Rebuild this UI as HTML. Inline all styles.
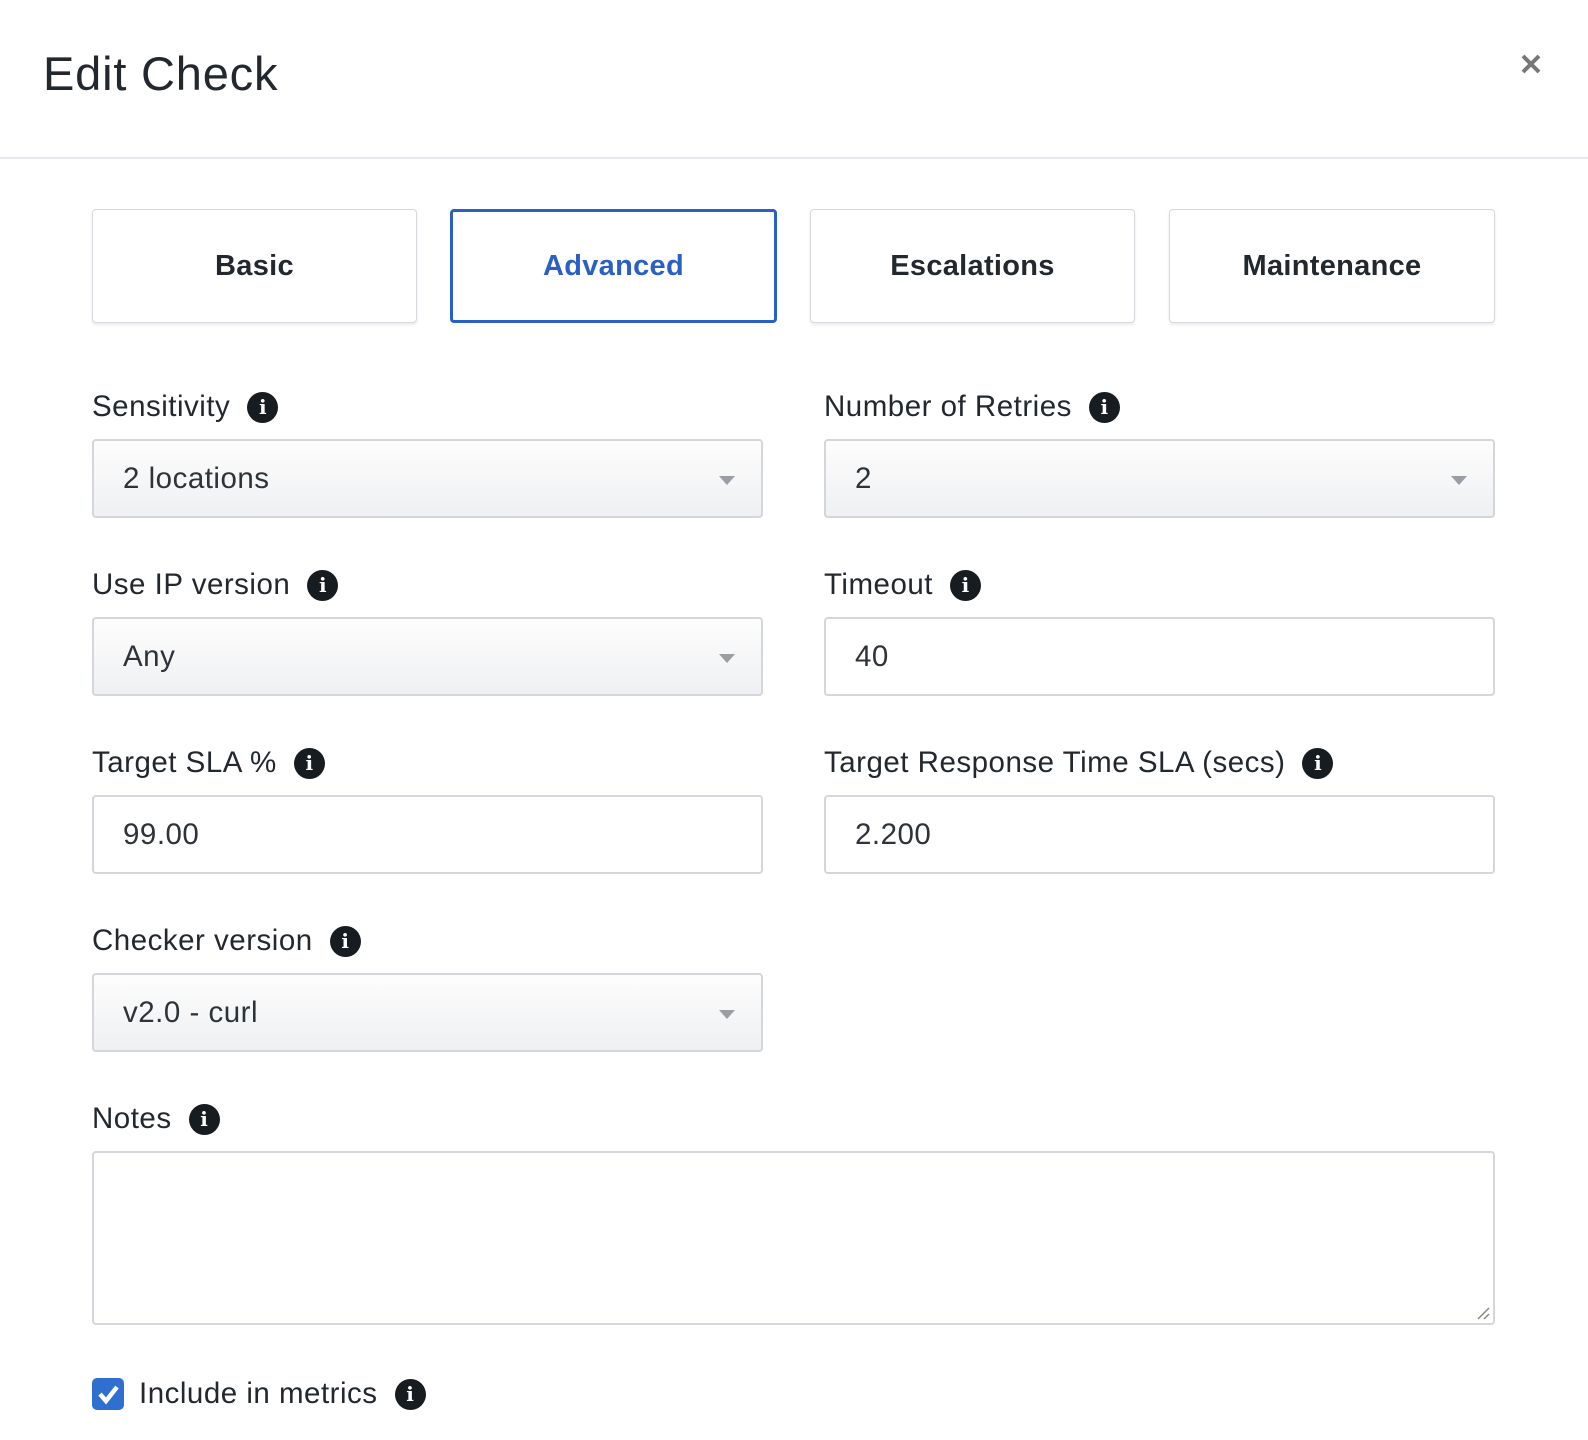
<!DOCTYPE html>
<html><head><style>
*{box-sizing:border-box;margin:0;padding:0}
body{width:1588px;height:1440px;background:#fff;font-family:"Liberation Sans",sans-serif;color:#22282e;position:relative;overflow:hidden}
.abs{position:absolute}
h1{position:absolute;left:43px;top:46px;font-size:47px;font-weight:400;letter-spacing:0.8px}
.hr{position:absolute;left:0;top:157px;width:1588px;height:2px;background:#e8e9ee}
.tab{position:absolute;top:209px;height:114px;border:1px solid #d5d8dc;border-radius:4px;box-shadow:0 2px 3px rgba(0,0,0,.08);display:flex;align-items:center;justify-content:center;font-weight:700;font-size:29px;color:#22282e;letter-spacing:0.3px}
.tab.on{border:3px solid #2b5fc4;color:#2b5fc4;box-shadow:none}
.lbl{position:absolute;font-size:29.5px;display:flex;align-items:center;height:36px;letter-spacing:0.5px}
.i{display:inline-block;width:31px;height:31px;border-radius:50%;background:#171c21;color:#fff;font-family:"DejaVu Serif",serif;font-weight:700;font-size:20px;text-align:center;line-height:31px;margin-left:17px;letter-spacing:0}
.f{position:absolute;width:671px;height:79px;border:2px solid #d3d6da;border-radius:4px;font-size:29.5px;padding-left:29px;display:flex;align-items:center;color:#2d3339;letter-spacing:0.5px}
.sel{background:linear-gradient(#fdfdfd,#eff0f2)}
.sel:after{content:"";position:absolute;right:26px;top:35px;border-left:8px solid transparent;border-right:8px solid transparent;border-top:9px solid #9a9ea3}
</style></head><body>
<h1>Edit Check</h1>
<svg class="abs" style="left:1520px;top:53px" width="22" height="22"><path d="M3 3L19 19M19 3L3 19" stroke="#777" stroke-width="4"/></svg>
<div class="hr"></div>
<div class="tab" style="left:92px;width:325px">Basic</div>
<div class="tab on" style="left:450px;width:327px">Advanced</div>
<div class="tab" style="left:810px;width:325px">Escalations</div>
<div class="tab" style="left:1169px;width:326px">Maintenance</div>

<div class="lbl" style="left:92px;top:389px">Sensitivity<span class="i">i</span></div>
<div class="lbl" style="left:824px;top:389px">Number of Retries<span class="i">i</span></div>
<div class="f sel" style="left:92px;top:439px">2 locations</div>
<div class="f sel" style="left:824px;top:439px">2</div>

<div class="lbl" style="left:92px;top:567px">Use IP version<span class="i">i</span></div>
<div class="lbl" style="left:824px;top:567px">Timeout<span class="i">i</span></div>
<div class="f sel" style="left:92px;top:617px">Any</div>
<div class="f" style="left:824px;top:617px">40</div>

<div class="lbl" style="left:92px;top:745px">Target SLA %<span class="i">i</span></div>
<div class="lbl" style="left:824px;top:745px">Target Response Time SLA (secs)<span class="i">i</span></div>
<div class="f" style="left:92px;top:795px">99.00</div>
<div class="f" style="left:824px;top:795px">2.200</div>

<div class="lbl" style="left:92px;top:923px">Checker version<span class="i">i</span></div>
<div class="f sel" style="left:92px;top:973px">v2.0 - curl</div>

<div class="lbl" style="left:92px;top:1101px">Notes<span class="i">i</span></div>
<div class="f" style="left:92px;top:1151px;width:1403px;height:174px"></div>
<svg class="abs" style="left:1476px;top:1306px" width="14" height="14"><path d="M2 13L13 2M8 13L13 8" stroke="#888" stroke-width="1.5"/></svg>

<div class="abs" style="left:92px;top:1378px;width:32px;height:32px;border-radius:5px;background:#2f6fd0"></div>
<svg class="abs" style="left:92px;top:1378px" width="32" height="32"><path d="M8 16L14 23L25 9" stroke="#fff" stroke-width="4.5" fill="none"/></svg>
<div class="lbl" style="left:139px;top:1376px">Include in metrics<span class="i">i</span></div>
</body></html>
